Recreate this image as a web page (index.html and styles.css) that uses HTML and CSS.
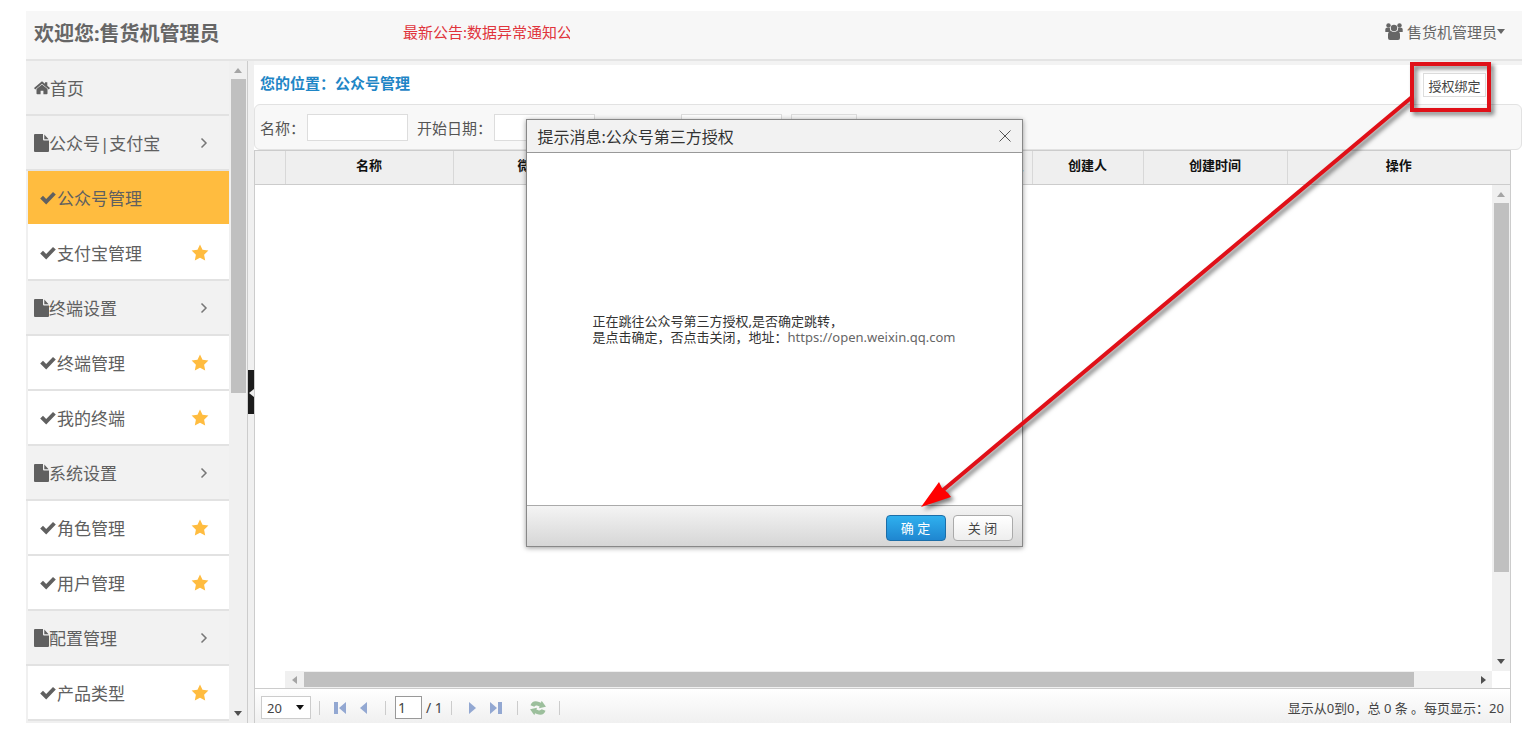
FILE: index.html
```html
<!DOCTYPE html>
<html lang="zh-CN">
<head>
    <meta charset="UTF-8">
    <meta name="viewport" content="width=device-width, initial-scale=1.0">
    <title>公众号管理</title>
    <link rel="stylesheet" href="styles.css">
</head>
<body>
    <!-- 图标 -->
    <svg class="sprite" aria-hidden="true">
        <symbol id="i-home" viewBox="0 0 16 14">
            <path d="M8 3.500 2.500 8V12.500c0 .5.3.8.8.8h3.300V9.700h2.800v3.600h3.300c.5 0 .8-.3.8-.8V8z"/>
            <path d="M8 .3 11 2.800V1.300h2.300v3.400L16 7l-1.200 1.500L8 2.700 1.200 8.500 0 7z"/>
        </symbol>
        <symbol id="i-file" viewBox="0 0 15 18">
            <path d="M1 0h8v5.500q0 1 1 1h5V17q0 1-1 1H1q-1 0-1-1V1q0-1 1-1zM10.300.4l4.300 4.800h-4.300z"/>
        </symbol>
        <symbol id="i-check" viewBox="0 0 16 14">
            <path d="M.2 7.500 3 4.700l3.200 3.200L13 .9l2.800 2.700L6.200 13.400z"/>
        </symbol>
        <symbol id="i-star" viewBox="0 0 18 17">
            <path d="M9 .5l2.500 5.300 5.900.8-4.300 4.100 1.100 5.900L9 13.800l-5.200 2.800 1.100-5.900L.6 6.600l5.900-.8z"/>
        </symbol>
        <symbol id="i-arrow" viewBox="0 0 8 12">
            <path d="M1.500 1.500 6 6l-4.500 4.500" fill="none" stroke="currentColor" stroke-width="1.500"/>
        </symbol>
        <symbol id="i-tri" viewBox="0 0 8 5">
            <path d="M0 0h8L4 5z"/>
        </symbol>
    </svg>

    <header class="top">
        <h1>欢迎您:售货机管理员</h1>
        <div class="notice">最新公告:数据异常通知公告</div>
        <button type="button" class="user">
            <svg class="users" viewBox="0 0 18 17">
                <circle cx="3.500" cy="2.500" r="2.200"/><circle cx="14.500" cy="2.500" r="2.200"/>
                <circle cx="9" cy="5" r="3.200"/>
                <path d="M.3 9V6.500q0-1.800 1.500-1.800h3Q5 7 6 9zM17.700 9V6.500q0-1.800-1.500-1.800h-3Q13 7 12 9z"/>
                <path d="M3 15v-3.500q0-3.300 3-3.600Q9 10 12 7.900q3 .3 3 3.600V15q0 2-2 2H5q-2 0-2-2z"/>
            </svg>
            <span>售货机管理员</span>
            <svg class="tri"><use href="#i-tri"/></svg>
        </button>
    </header>

    <div class="main">
        <nav class="side">
            <ul class="menu">
                <li class="group"><a href="#"><svg class="home"><use href="#i-home"/></svg>首页</a></li>
                <li class="group"><a href="#"><svg class="file"><use href="#i-file"/></svg>公众号|支付宝<svg class="arrow"><use href="#i-arrow"/></svg></a></li>
                <li class="item active"><a href="#"><svg class="check"><use href="#i-check"/></svg>公众号管理</a></li>
                <li class="item"><a href="#"><svg class="check"><use href="#i-check"/></svg>支付宝管理<svg class="star"><use href="#i-star"/></svg></a></li>
                <li class="group"><a href="#"><svg class="file"><use href="#i-file"/></svg>终端设置<svg class="arrow"><use href="#i-arrow"/></svg></a></li>
                <li class="item"><a href="#"><svg class="check"><use href="#i-check"/></svg>终端管理<svg class="star"><use href="#i-star"/></svg></a></li>
                <li class="item"><a href="#"><svg class="check"><use href="#i-check"/></svg>我的终端<svg class="star"><use href="#i-star"/></svg></a></li>
                <li class="group"><a href="#"><svg class="file"><use href="#i-file"/></svg>系统设置<svg class="arrow"><use href="#i-arrow"/></svg></a></li>
                <li class="item"><a href="#"><svg class="check"><use href="#i-check"/></svg>角色管理<svg class="star"><use href="#i-star"/></svg></a></li>
                <li class="item"><a href="#"><svg class="check"><use href="#i-check"/></svg>用户管理<svg class="star"><use href="#i-star"/></svg></a></li>
                <li class="group"><a href="#"><svg class="file"><use href="#i-file"/></svg>配置管理<svg class="arrow"><use href="#i-arrow"/></svg></a></li>
                <li class="item"><a href="#"><svg class="check"><use href="#i-check"/></svg>产品类型<svg class="star"><use href="#i-star"/></svg></a></li>
            </ul>
            <div class="vbar">
                <svg class="tri up"><use href="#i-tri"/></svg>
                <div class="side-thumb"></div>
                <svg class="tri down"><use href="#i-tri"/></svg>
            </div>
        </nav>

        <div class="splitter">
            <button type="button" aria-label="收起菜单"><svg viewBox="0 0 6 44"><path d="M6 19v8l-5-4z"/></svg></button>
        </div>

        <section class="content">
            <div class="location">
                <h2>您的位置：公众号管理</h2>
                <button type="button" class="bind">授权绑定</button>
            </div>

            <form class="search">
                <label for="name">名称：</label>
                <input type="text" id="name">
                <label for="start">开始日期：</label>
                <input type="text" id="start">
                <label for="end">结束日期：</label>
                <input type="text" id="end">
                <button type="button">查询</button>
            </form>

            <div class="grid">
                <table>
                    <colgroup>
                        <col class="c-num"><col class="c-name"><col class="c-name"><col><col class="c-type"><col class="c-user"><col class="c-time"><col class="c-op">
                    </colgroup>
                    <thead>
                        <tr>
                            <th></th>
                            <th>名称</th>
                            <th>微信号</th>
                            <th>原始ID</th>
                            <th>公众号类型</th>
                            <th>创建人</th>
                            <th>创建时间</th>
                            <th>操作</th>
                        </tr>
                    </thead>
                </table>
                <div class="rows">
                    <div class="vbar">
                        <svg class="tri up"><use href="#i-tri"/></svg>
                        <div class="grid-thumb"></div>
                        <svg class="tri down"><use href="#i-tri"/></svg>
                    </div>
                </div>
                <div class="hbar">
                    <svg class="left" viewBox="0 0 5 8"><path d="M5 0v8L0 4z"/></svg>
                    <div class="row-thumb"></div>
                    <svg class="right" viewBox="0 0 5 8"><path d="M0 0v8l5-4z"/></svg>
                </div>
                <div class="pager">
                    <div class="size">
                        <select aria-label="每页显示"><option>20</option></select>
                        <svg class="tri"><use href="#i-tri"/></svg>
                    </div>
                    <i class="sep"></i>
                    <button type="button" aria-label="首页"><svg viewBox="0 0 12 14"><path d="M0 1h4v12H0zM12 1v12L5 7z"/></svg></button>
                    <button type="button" aria-label="上一页"><svg viewBox="0 0 12 14"><path d="M9 1v12L2 7z"/></svg></button>
                    <i class="sep"></i>
                    <label class="page"><input type="text" value="1" aria-label="页码">/ 1</label>
                    <i class="sep"></i>
                    <button type="button" aria-label="下一页"><svg viewBox="0 0 12 14"><path d="M3 1v12l7-6z"/></svg></button>
                    <button type="button" aria-label="末页"><svg viewBox="0 0 12 14"><path d="M8 1h4v12H8zM0 1v12l7-6z"/></svg></button>
                    <i class="sep"></i>
                    <button type="button" class="reload" aria-label="刷新">
                        <svg viewBox="0 0 18 16"><path d="M1 8Q1 2 8 2h2V0l6 4-6 4V6H8Q6 6 5 8zM17 8q0 6-7 6H8v2l-6-4 6-4v2h2q2 0 3-2z"/></svg>
                    </button>
                    <i class="sep"></i>
                    <span class="total">显示从0到0，总 0 条 。每页显示：20</span>
                </div>
            </div>
        </section>
    </div>

    <!-- 授权提示框 -->
    <div class="dialog" role="dialog" aria-labelledby="dialog-title">
        <div class="dialog-head">
            <h3 id="dialog-title">提示消息:公众号第三方授权</h3>
            <button type="button" class="close" aria-label="关闭"><svg viewBox="0 0 12 12"><path d="M.5.5l11 11M11.500.5l-11 11"/></svg></button>
        </div>
        <div class="dialog-body">
            <p>正在跳往公众号第三方授权,是否确定跳转，<br>是点击确定，否点击关闭，地址：<span class="url">https://open.weixin.qq.com</span></p>
        </div>
        <div class="dialog-foot">
            <button type="button" class="ok">确 定</button>
            <button type="button">关 闭</button>
        </div>
    </div>

    <!-- 操作指引: 授权绑定 -> 确定 -->
    <svg class="guide" viewBox="0 0 600 460" aria-hidden="true">
        <rect x="512" y="14" width="77" height="46"/>
        <path class="line" d="M512 47 L42 441"/>
        <path class="head" d="M21 457 L39 432 L42 438 L48 443 L51 447 Z"/>
    </svg>
</body>
</html>
```
FILE: styles.css
```css
* {
    box-sizing: border-box;
}
body {
    display: flex;
    flex-direction: column;
    position: relative;
    height: 100vh;
    margin: 0;
    padding: 11px 7px 22px 26px;
    overflow: hidden;
    background: #fff;
    color: #555;
    font-family: "Noto Sans", "Noto Sans CJK SC", sans-serif;
    font-size: 13px;
}
h1, h2, h3, p, ul {
    margin: 0;
    padding: 0;
}
button, input, select {
    font: inherit;
    color: inherit;
}
button {
    padding: 0;
    border: none;
    background: none;
    cursor: pointer;
}
svg {
    display: block;
    flex: none;
    fill: currentColor;
}
.sprite {
    position: absolute;
    width: 0;
    height: 0;
}
.tri {
    width: 8px;
    height: 5px;
}

/* 顶部 */
.top {
    display: flex;
    flex: none;
    height: 50px;
    padding: 0 17px 0 8px;
    background: #f7f7f7;
    border-bottom: 2px solid #e4e4e4;
    line-height: 42px;
}
.top h1 {
    width: 369px;
    font-size: 20px;
    line-height: 46px;
    color: #666;
}
.notice {
    width: 167px;
    overflow: hidden;
    white-space: nowrap;
    font-size: 15px;
    color: #e0343c;
}
.user {
    display: flex;
    align-items: center;
    height: 41px;
    margin-left: auto;
    font-size: 15px;
    color: #666;
}
.users {
    width: 18px;
    height: 17px;
    margin-right: 4px;
}

/* 左侧菜单 */
.main {
    display: flex;
    flex: 1;
    min-height: 0;
}
.side {
    display: flex;
    width: 222px;
    overflow: hidden;
    background: #f0f0f0;
    border-right: 1px solid #ccc;
}
.menu {
    width: 203px;
    list-style: none;
    font-size: 17px;
}
.menu a {
    display: flex;
    align-items: center;
    height: 55px;
    padding-left: 8px;
    border-bottom: 2px solid #e2e2e2;
    background: #f2f2f2;
    color: #606060;
    text-decoration: none;
}
.menu .item a {
    margin-left: 2px;
    padding-left: 12px;
    background: #fff;
}
.menu .active a {
    background: #ffbc3f;
    border-color: #fff;
}
.home {
    width: 16px;
    height: 14px;
}
.file {
    width: 15px;
    height: 18px;
}
.check {
    width: 16px;
    height: 14px;
    margin-right: 1px;
}
.star {
    width: 18px;
    height: 17px;
    margin: 0 20px 0 auto;
    color: #ffbc3f;
}
.arrow {
    width: 8px;
    height: 12px;
    margin: 0 21px 0 auto;
    color: #777;
}
.vbar {
    display: flex;
    flex-direction: column;
    align-items: center;
    width: 18px;
    background: #f0f0f0;
}
.up {
    margin: 7px 0 6px;
    transform: rotate(180deg);
    color: #a5a5a5;
}
.down {
    margin: auto 0 7px;
    color: #505050;
}
.side-thumb, .grid-thumb {
    width: 15px;
    height: 314px;
    background: #c0c0c0;
}
.grid-thumb {
    height: 76%;
}
.splitter {
    display: flex;
    align-items: center;
    width: 6px;
    background: #f0f0f0;
}
.splitter button {
    width: 6px;
    height: 44px;
    background: #1c1c1c;
    color: #eee;
}

/* 内容 */
.content {
    display: flex;
    flex: 1;
    flex-direction: column;
    min-width: 0;
    border-top: 4px solid #f3f3f3;
}
.location {
    display: flex;
    align-items: flex-start;
    height: 39px;
    padding: 8px 36px 0 6px;
}
.location h2 {
    font-size: 15px;
    line-height: 20px;
    color: #1f86c6;
}
.bind {
    width: 63px;
    height: 24px;
    margin-left: auto;
    border: 1px solid #ddd;
    color: #444;
}
.search {
    display: flex;
    align-items: center;
    height: 46px;
    padding: 0 5px;
    border: 1px solid #e2e2e2;
    border-radius: 6px;
    background: #f8f8f8;
    font-size: 15px;
}
.search label {
    margin-right: 2px;
}
.search input {
    width: 101px;
    height: 27px;
    margin-right: 9px;
    border: 1px solid #ddd;
    background: #fff;
}
.search button {
    width: 66px;
    height: 27px;
    border: 1px solid #ddd;
}
.grid {
    display: flex;
    flex: 1;
    flex-direction: column;
    width: calc(100% - 11px);
    border: 1px solid #ccc;
    border-bottom: none;
}
table {
    width: 100%;
    border-collapse: collapse;
    table-layout: fixed;
}
th {
    height: 33px;
    padding: 0 0 5px;
    border-right: 1px solid #d8d8d8;
    border-bottom: 1px solid #ccc;
    background: #efefef;
    color: #111;
    font-size: 13px;
}
th:last-child {
    border-right: none;
}
.c-num {
    width: 30px;
}
.c-name {
    width: 168px;
}
.c-type {
    width: 82px;
}
.c-user {
    width: 111px;
}
.c-time {
    width: 144px;
}
.c-op {
    width: 223px;
}
.rows {
    display: flex;
    flex: 1;
    justify-content: flex-end;
}
.hbar {
    display: flex;
    align-items: center;
    height: 17px;
    margin: 0 18px 0 30px;
    background: #f0f0f0;
}
.hbar svg {
    width: 5px;
    height: 8px;
}
.hbar .left {
    margin: 0 7px;
    color: #a5a5a5;
}
.hbar .right {
    margin: 0 6px 0 auto;
    color: #505050;
}
.row-thumb {
    width: 92%;
    height: 15px;
    background: #c0c0c0;
}

/* 分页 */
.pager {
    display: flex;
    align-items: center;
    height: 35px;
    padding: 3px 6px 0;
    border-top: 1px solid #ccc;
    background: linear-gradient(#fff, #f0f0f0);
    color: #444;
}
.size {
    position: relative;
    margin-right: 5px;
}
.size select {
    width: 50px;
    height: 23px;
    padding: 0 5px;
    appearance: none;
    border: 1px solid #ccc;
    border-radius: 0;
    background: #fff;
}
.size .tri {
    position: absolute;
    top: 9px;
    right: 7px;
    color: #111;
}
.sep {
    width: 1px;
    height: 14px;
    margin: 0 14px 0 3px;
    background: #ccc;
}
.pager button {
    margin-right: 12px;
    color: #93a8d2;
}
.pager button svg {
    width: 12px;
    height: 14px;
}
.pager .reload {
    margin: 0 9px 0 -3px;
}
.pager .reload svg {
    width: 18px;
    height: 16px;
    color: #9cbf9c;
    transform: rotate(20deg);
}
.page {
    display: flex;
    align-items: center;
    margin: 0 5px 0 -5px;
    font-size: 14px;
}
.page input {
    width: 27px;
    height: 23px;
    margin-right: 4px;
    padding: 0 2px;
    border: 1px solid #999;
    background: #fff;
}
.total {
    margin-left: auto;
}

/* 提示框 */
.dialog {
    display: flex;
    flex-direction: column;
    position: absolute;
    top: 119px;
    left: calc(50% + 10px);
    width: 497px;
    height: 428px;
    margin-left: -249px;
    border: 1px solid #888;
    background: #fff;
    box-shadow: 0 1px 5px rgba(0,0,0,0.4);
}
.dialog-head {
    display: flex;
    align-items: center;
    height: 33px;
    padding: 0 11px;
    border-bottom: 1px solid #999;
    background: #f2f2f2;
}
.dialog-head h3 {
    font-size: 16px;
    font-weight: 400;
    color: #333;
}
.close {
    margin-left: auto;
}
.close svg {
    width: 12px;
    height: 12px;
    stroke: #555;
}
.dialog-body {
    display: flex;
    flex: 1;
    align-items: center;
    justify-content: center;
    color: #333;
    line-height: 16px;
}
.url {
    color: #666;
}
.dialog-foot {
    display: flex;
    align-items: center;
    justify-content: flex-end;
    gap: 7px;
    height: 41px;
    padding: 3px 9px 0;
    border-top: 1px solid #aaa;
    background: linear-gradient(#f4f4f4, #d6d6d6);
}
.dialog-foot button {
    width: 60px;
    height: 26px;
    border: 1px solid #aaa;
    border-radius: 4px;
    background: linear-gradient(#fff, #eee);
    color: #444;
}
.dialog-foot .ok {
    border-color: #1c6ea8;
    background: linear-gradient(#2fb0ee, #1f86d0);
    color: #fff;
}

/* 指引箭头 */
.guide {
    position: absolute;
    top: 50px;
    right: 29px;
    width: 600px;
    height: 460px;
    pointer-events: none;
    filter: drop-shadow(3px 3px 2px rgba(0,0,0,0.5));
}
.guide rect, .guide .line {
    fill: none;
    stroke: #e01018;
    stroke-width: 4;
}
.guide .head {
    fill: #f00;
}
```
